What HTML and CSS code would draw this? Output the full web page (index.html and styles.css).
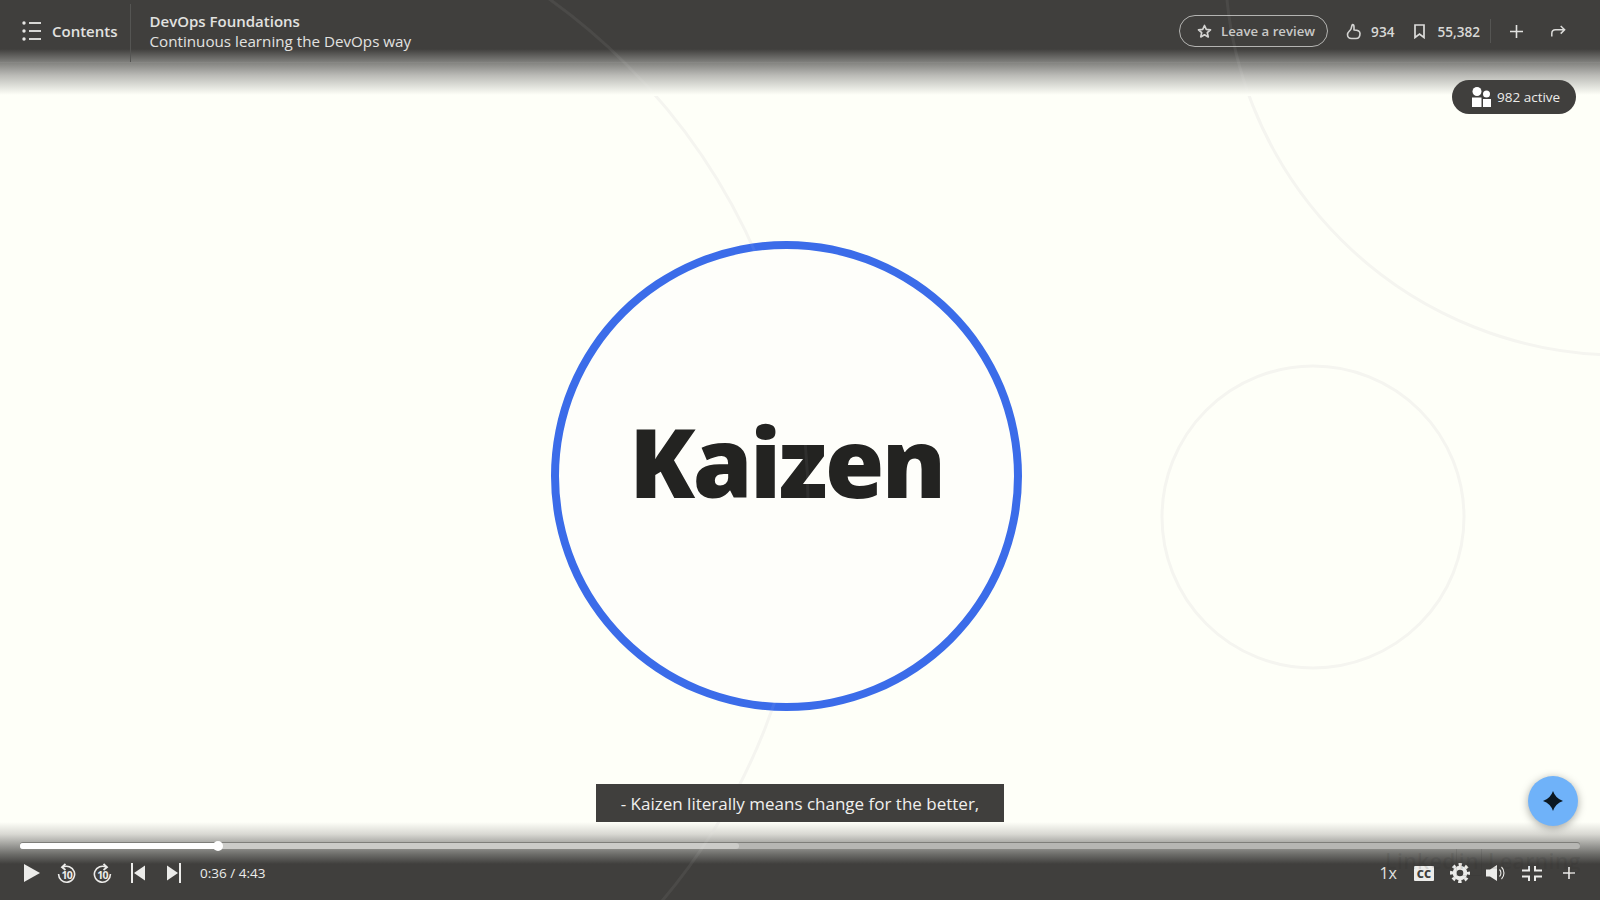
FILE: index.html
```html
<!DOCTYPE html>
<html lang="en">
<head>
  <meta charset="UTF-8">
  <meta name="viewport" content="width=device-width, initial-scale=1.0">
  <title>DevOps Foundations</title>
  <link rel="stylesheet" href="styles.css">
</head>
<body>
  <div class="player">
    <!-- Video frame -->
    <svg class="frame-lines" viewBox="0 0 1600 900" width="1600" height="900" fill="none" stroke="#f5f5f0" stroke-width="3">
      <circle cx="190" cy="502" r="618"/>
      <circle cx="1620" cy="-40" r="395"/>
      <circle cx="1313" cy="517" r="151"/>
    </svg>
    <div class="ring"><span class="ring-word">Kaizen</span></div>

    <!-- Top bar -->
    <header class="top-shade">
      <div class="top-bar">
        <button class="contents-btn">
          <svg class="ico" width="20" height="20" viewBox="0 0 20 20" fill="#e8e8e6">
            <circle cx="2" cy="2" r="1.7"/><rect x="7" y="1.100" width="12" height="1.800"/>
            <circle cx="2" cy="10" r="1.7"/><rect x="7" y="9.100" width="12" height="1.800"/>
            <circle cx="2" cy="18" r="1.7"/><rect x="7" y="17.100" width="12" height="1.800"/>
          </svg>
          <span>Contents</span>
        </button>
        <div class="titles">
          <div class="course">DevOps Foundations</div>
          <div class="chapter">Continuous learning the DevOps way</div>
        </div>
        <div class="top-actions">
          <button class="review-btn">
            <svg width="15" height="15" viewBox="0 0 16 16" fill="none" stroke="#d4d4d2" stroke-width="1.800" stroke-linejoin="round"><path d="M8 1.600l1.900 4.200 4.500.5-3.400 3 1 4.500L8 11.500l-4 2.300 1-4.500-3.400-3 4.500-.5z"/></svg>
            <span>Leave a review</span>
          </button>
          <div class="stat like">
            <svg width="16" height="17" viewBox="0 0 16 17" fill="none" stroke="#d4d4d2" stroke-width="1.600" stroke-linejoin="round"><path d="M6.500 1.500C7.500 1.500 8 2.500 8 4v3c2.500 0 6 .5 6 3.500s-1.500 5-4 5H5.500C3 15.500 1.500 14 1.500 11.500 1.500 9 4 8 5 6c.5-1 .5-3 1.500-4.500z"/></svg>
            <span>934</span>
          </div>
          <div class="stat saved">
            <svg width="11" height="15" viewBox="0 0 11 15" fill="none" stroke="#dcdcda" stroke-width="1.700"><path d="M1 1h9v12.500L5.500 10 1 13.500z"/></svg>
            <span>55,382</span>
          </div>
          <div class="top-rule"></div>
          <svg class="add" width="13" height="13" viewBox="0 0 13 13" stroke="#e2e2e0" stroke-width="1.600"><path d="M6.500 0v13M0 6.500h13"/></svg>
          <svg class="share" width="15" height="12" viewBox="0 0 15 12" fill="none" stroke="#dcdcda" stroke-width="1.500"><path d="M.8 11.500V8.600c0-2.500 1.500-3.800 3.700-3.800h9M9.700 1l3.900 3.800-3.900 3.800"/></svg>
        </div>
      </div>
    </header>

    <!-- Bottom controls -->
    <footer class="bottom-shade">
      <div class="watermark">Linked<span class="wm-box">in</span> Learning</div>
      <div class="progress">
        <div class="buffered"></div>
        <div class="played"></div>
        <div class="thumb"></div>
      </div>
      <div class="controls">
        <div class="controls-left">
          <svg class="play" width="16" height="18" viewBox="0 0 16 18" fill="#ececea"><path d="M0 0l16 9L0 18z"/></svg>
          <svg class="skip back" width="19" height="21" viewBox="0 0 19 21" fill="none" stroke="#ececea" stroke-width="1.600">
            <path d="M5.600 4.300A8 8 0 1 1 1.600 11"/><path d="M8.500 1L5 4.300l3.500 2.700" stroke-width="1.800"/>
            <text x="9.800" y="16" class="ten">10</text>
          </svg>
          <svg class="skip fwd" width="19" height="21" viewBox="0 0 19 21" fill="none" stroke="#ececea" stroke-width="1.600">
            <path d="M13.400 4.300A8 8 0 1 0 17.400 11"/><path d="M10.500 1L14 4.300l-3.500 2.700" stroke-width="1.800"/>
            <text x="9.500" y="16" class="ten">10</text>
          </svg>
          <svg class="prev" width="14" height="20" viewBox="0 0 14 20" fill="#ececea"><rect width="2" height="20"/><path d="M14 2.500v15L3 10z"/></svg>
          <svg class="next" width="14" height="20" viewBox="0 0 14 20" fill="#ececea"><rect x="12" width="2" height="20"/><path d="M0 2.500v15L11 10z"/></svg>
          <span class="time">0:36 / 4:43</span>
        </div>
        <div class="controls-right">
          <span class="speed">1x</span>
          <span class="cc">CC</span>
          <svg class="gear" width="20" height="20" viewBox="0 0 20 20" fill="none" stroke="#ececea">
            <circle cx="10" cy="10" r="5.300" stroke-width="4"/>
            <circle cx="10" cy="10" r="8.500" stroke-width="3" stroke-dasharray="3.400 3.276" stroke-dashoffset="1.700"/>
          </svg>
          <svg class="volume" width="20" height="18" viewBox="0 0 20 18" fill="none" stroke="#ececea" stroke-width="1.100">
            <path d="M0 5.500h4L11 1v16l-7-4.500H0z" fill="#ececea" stroke="none"/>
            <path d="M13.500 5.500a5 5 0 0 1 0 7"/><path d="M15.500 3a8.500 8.500 0 0 1 0 12"/>
          </svg>
          <svg class="exit-full" width="20" height="15" viewBox="0 0 20 15" fill="none" stroke="#ececea" stroke-width="2">
            <path d="M7 0v4.500H0M13 0v4.500H20M7 15v-4.500H0M13 15v-4.500H20"/>
          </svg>
          <svg class="more" width="12" height="12" viewBox="0 0 12 12" stroke="#ececea" stroke-width="1.600"><path d="M6 0v12M0 6h12"/></svg>
        </div>
      </div>
    </footer>

    <!-- The video's lines still show faintly through the bars -->
    <svg class="bar-lines" viewBox="0 0 1600 900" width="1600" height="900" fill="none" stroke="#ffffff" stroke-opacity="0.06" stroke-width="3">
      <circle cx="190" cy="502" r="618"/>
      <circle cx="1620" cy="-40" r="395"/>
    </svg>

    <!-- Overlays -->
    <div class="active-pill">
      <svg width="19" height="20" viewBox="0 0 19 20" fill="#fff">
        <circle cx="5" cy="4.500" r="4.500"/><circle cx="14.500" cy="7" r="3.500"/>
        <rect x="0" y="10.500" width="9.500" height="9.500"/><rect x="11" y="12" width="8" height="8"/>
      </svg>
      <span>982 active</span>
    </div>

    <div class="caption">- Kaizen literally means change for the better,</div>

    <button class="ask-btn">
      <svg width="20" height="20" viewBox="0 0 20 20" fill="#0b1822"><path d="M10 0Q12.500 7.500 20 10 12.500 12.500 10 20 7.500 12.500 0 10 7.500 7.500 10 0z"/></svg>
    </button>
  </div>
</body>
</html>
```

FILE: styles.css
```css
/* Styles */
* {
  box-sizing: border-box;
}

body {
  margin: 0;
  background: #fefff8;
  font-family: "Open Sans", "Noto Sans", Arial, sans-serif;
  color: #e6e6e4;
  overflow: hidden;
}

button {
  font: inherit;
  color: inherit;
  background: none;
  border: none;
  padding: 0;
}

svg {
  display: block;
  flex: none;
}

.player {
  position: relative;
  width: 1600px;
  height: 900px;
  display: flex;
  flex-direction: column;
  justify-content: space-between;
  overflow: hidden;
  background: #fefff8;
}

/* Video frame */
.frame-lines {
  position: absolute;
  top: 0;
  left: 0;
  filter: blur(0.6px);
}

.bar-lines {
  position: absolute;
  top: 0;
  left: 0;
  filter: blur(0.6px);
  pointer-events: none;
}

.ring {
  position: absolute;
  left: 551px;
  top: 241px;
  width: 471px;
  height: 470px;
  border: 8px solid #3b6ce9;
  border-radius: 50%;
  background: #fefefa;
  display: flex;
  align-items: center;
  justify-content: center;
  padding-bottom: 30px;
}

.ring-word {
  font-family: "Noto Sans", sans-serif;
  font-weight: 900;
  font-size: 96px;
  line-height: 1;
  letter-spacing: -2.500px;
  color: #232321;
}

/* Top bar */
.top-shade {
  position: relative;
  height: 96px;
  background: linear-gradient(to bottom, #403f3d 0, #403f3d 49px, #7f7f7c 62px, #b9b9b5 75px, #fefff8 95px);
}

.top-bar {
  height: 63px;
  display: flex;
  align-items: center;
  border-bottom: 1px solid rgba(255, 255, 255, 0.05);
  padding-right: 34px;
}

.contents-btn {
  display: flex;
  align-items: center;
  gap: 10px;
  height: 58px;
  margin-top: 4px;
  padding: 0 12px 4px 22px;
  border-right: 1px solid #555553;
  font-size: 15px;
  font-weight: 600;
  color: #e2e2e0;
}

.titles {
  margin-left: 19px;
  font-size: 15.200px;
  line-height: 20px;
  color: #e2e2e0;
}

.course {
  font-size: 15px;
  font-weight: 600;
}

.top-actions {
  margin-left: auto;
  display: flex;
  align-items: center;
  font-size: 13.600px;
  font-weight: 600;
  color: #d8d8d6;
}

.review-btn {
  display: flex;
  align-items: center;
  gap: 9px;
  height: 32px;
  width: 149px;
  padding-left: 17px;
  border: 1px solid #b4b4b2;
  border-radius: 16px;
  font-size: 13.200px;
  font-weight: 600;
  color: #c9c9c7;
}

.stat {
  display: flex;
  align-items: center;
  gap: 9px;
}

.like {
  margin-left: 18px;
}

.saved {
  margin-left: 20px;
  gap: 12px;
}

.top-rule {
  width: 1px;
  height: 24px;
  margin-left: 10px;
  background: #555553;
}

.add {
  margin-left: 19px;
}

.share {
  margin-left: 28px;
}

/* Overlays */
.active-pill {
  position: absolute;
  left: 1452px;
  top: 80px;
  width: 124px;
  height: 34px;
  border-radius: 17px;
  background: #403f3d;
  display: flex;
  align-items: center;
  gap: 6px;
  padding-left: 20px;
  font-size: 13.500px;
  color: #ececea;
}

.caption {
  position: absolute;
  left: 596px;
  top: 784px;
  width: 408px;
  height: 38px;
  background: #403f3d;
  display: flex;
  align-items: center;
  justify-content: center;
  font-size: 17px;
  color: #f0f0ee;
  white-space: nowrap;
}

.ask-btn {
  position: absolute;
  left: 1528px;
  top: 776px;
  width: 50px;
  height: 50px;
  border-radius: 50%;
  background: #6fb2f9;
  box-shadow: 0 2px 8px rgba(0, 0, 0, 0.35);
  display: flex;
  align-items: center;
  justify-content: center;
}

/* Bottom controls */
.bottom-shade {
  position: relative;
  height: 78px;
  background: linear-gradient(to bottom, #fefff800 0, #d9d9d3 12px, #a3a39f 22px, #6e6e6b 32px, #403f3d 42px);
}

.watermark {
  position: absolute;
  left: 1385px;
  top: 25px;
  font-size: 21px;
  font-weight: 600;
  letter-spacing: 0.500px;
  color: rgba(40, 40, 38, 0.12);
  white-space: nowrap;
}

.wm-box {
  border: 1px solid rgba(40, 40, 38, 0.12);
  padding: 0 2px;
}

.progress {
  position: relative;
  height: 6px;
  margin: 21px 20px 0;
  border-radius: 3px;
  background: #b6b6b3;
  box-shadow: 0 -1px 0 rgba(70, 70, 68, 0.45);
}

.buffered {
  position: absolute;
  left: 0;
  top: 0;
  bottom: 0;
  width: 719px;
  border-radius: 3px;
  background: #cbcbc8;
}

.played {
  position: absolute;
  left: 0;
  top: 0;
  bottom: 0;
  width: 198px;
  border-radius: 3px;
  background: #fff;
}

.thumb {
  position: absolute;
  left: 193px;
  top: -2px;
  width: 10px;
  height: 10px;
  border-radius: 50%;
  background: #fff;
}

.controls {
  display: flex;
  align-items: center;
  justify-content: space-between;
  height: 40px;
  margin-top: 4px;
  padding: 0 25px 0 24px;
}

.controls-left,
.controls-right {
  display: flex;
  align-items: center;
}

.skip.back {
  margin-left: 17px;
}

.skip.fwd {
  margin-left: 17px;
}

.prev {
  margin-left: 19px;
}

.next {
  margin-left: 22px;
}

.time {
  margin-left: 19px;
  font-size: 13.500px;
  color: #ececea;
}

.ten {
  font-family: "Open Sans", sans-serif;
  font-size: 10.500px;
  font-weight: 700;
  fill: #ececea;
  stroke: none;
  text-anchor: middle;
  letter-spacing: -0.800px;
}

.speed {
  font-size: 16px;
  color: #e2e2e0;
}

.cc {
  width: 20px;
  height: 15px;
  margin-left: 17px;
  background: #ececea;
  border-radius: 1px;
  color: #403f3d;
  font-size: 11px;
  font-weight: 800;
  line-height: 15px;
  text-align: center;
}

.gear {
  margin-left: 16px;
}

.volume {
  margin-left: 16px;
}

.exit-full {
  margin-left: 16px;
}

.more {
  margin-left: 21px;
}
```
